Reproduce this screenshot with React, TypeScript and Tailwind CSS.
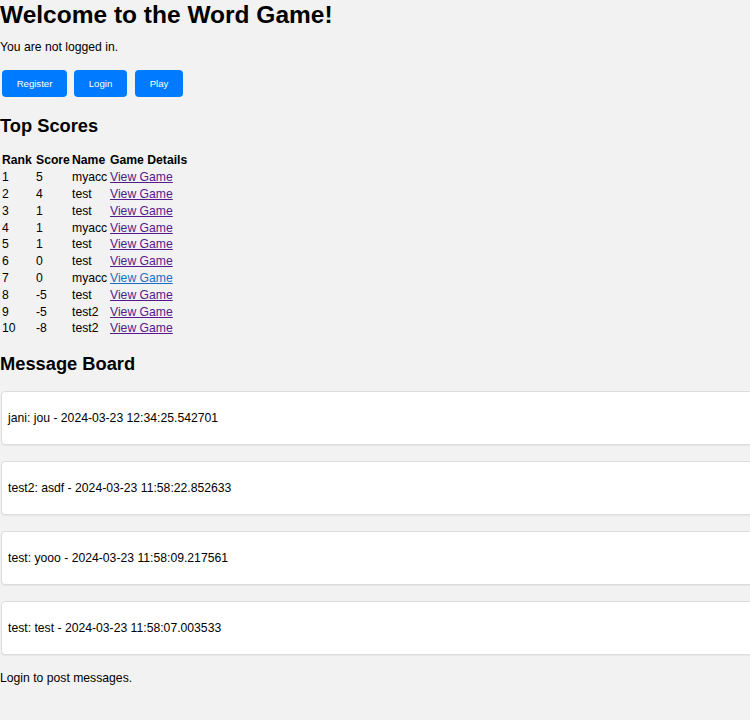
import React from "react";

const scores = [
  [1, 5, "myacc"],
  [2, 4, "test"],
  [3, 1, "test"],
  [4, 1, "myacc"],
  [5, 1, "test"],
  [6, 0, "test"],
  [7, 0, "myacc"],
  [8, -5, "test"],
  [9, -5, "test2"],
  [10, -8, "test2"],
];

const messages = [
  "jani: jou - 2024-03-23 12:34:25.542701",
  "test2: asdf - 2024-03-23 11:58:22.852633",
  "test: yooo - 2024-03-23 11:58:09.217561",
  "test: test - 2024-03-23 11:58:07.003533",
];

export default function App() {
  return (
    <div
      className="min-h-[720px] w-full overflow-x-hidden bg-[#f2f2f2] text-black text-[12.2px] leading-[16px]"
      style={{ fontFamily: '"Liberation Sans", Arial, sans-serif' }}
    >
      <h1 className="m-0 text-[24.5px] leading-[30px] font-bold">Welcome to the Word Game!</h1>
      <p className="mt-[9px]">You are not logged in.</p>
      <div className="mt-[15px] flex gap-[7px] pl-[2px]">
        <button className="h-[27px] w-[65px] rounded-[4px] bg-[#007bff] text-[9.6px] text-white">Register</button>
        <button className="h-[27px] w-[53px] rounded-[4px] bg-[#007bff] text-[9.6px] text-white">Login</button>
        <button className="ml-[1px] h-[27px] w-[48px] rounded-[4px] bg-[#007bff] text-[9.6px] text-white">Play</button>
      </div>
      <h2 className="mt-[18px] text-[18.3px] leading-[22px] font-bold">Top Scores</h2>
      <div className="mt-[15px] pl-[2px] grid grid-cols-[34px_36px_38px_auto] auto-rows-[16.8px] items-center">
        <div className="font-bold">Rank</div>
        <div className="font-bold">Score</div>
        <div className="font-bold">Name</div>
        <div className="font-bold">Game Details</div>
        {scores.map(([r, s, n]) => (
          <React.Fragment key={String(r)}>
            <div>{r}</div>
            <div>{s}</div>
            <div>{n}</div>
            <div>
              <a
                href="#"
                className={
                  r === 7
                    ? "text-[#1a6fc4] underline"
                    : "text-[#551a8b] underline"
                }
              >
                View Game
              </a>
            </div>
          </React.Fragment>
        ))}
      </div>
      <h2 className="mt-[16px] text-[18.3px] leading-[22px] font-bold">Message Board</h2>
      <div className="mt-[16px] flex flex-col gap-[16px]">
        {messages.map((m) => (
          <div
            key={m}
            className="ml-[1px] flex h-[54px] w-[780px] items-center rounded-[4px] border border-[#dcdcdc] bg-white pl-[6px] shadow-[0_1px_1px_rgba(0,0,0,0.05)]"
          >
            {m}
          </div>
        ))}
      </div>
      <p className="mt-[15px]">Login to post messages.</p>
    </div>
  );
}
